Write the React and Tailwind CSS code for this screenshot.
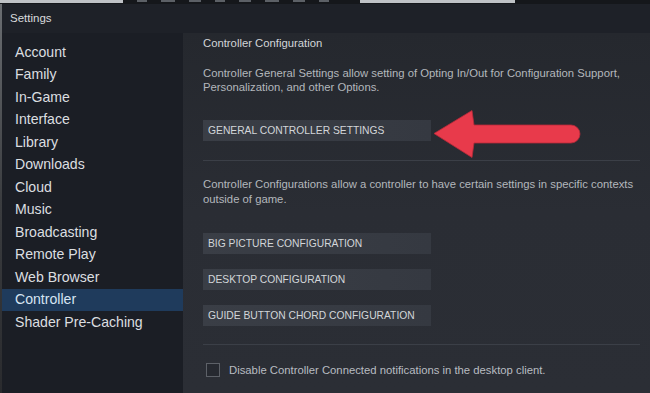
import React from 'react';

const NAV = [
  'Account', 'Family', 'In-Game', 'Interface', 'Library', 'Downloads', 'Cloud',
  'Music', 'Broadcasting', 'Remote Play', 'Web Browser', 'Controller', 'Shader Pre-Caching',
];

function ConfigButton({ children }) {
  return (
    <div className="w-[228px] h-[21px] flex items-center px-[5px] bg-gradient-to-r from-[#3a3e46] to-[#353941] text-[10.3px] text-[#d3d6d9] whitespace-nowrap">
      {children}
    </div>
  );
}

export default function App() {
  return (
    <div className="w-[650px] h-[393px] overflow-hidden flex flex-col bg-[#15171b] font-['Liberation_Sans',Arial,sans-serif]">
      {/* strip of the desktop behind the window */}
      <div className="h-[4px] flex items-start shrink-0">
        <div className="w-[123px] h-[3px] bg-[#bfc2c6]" />
        <div className="w-[237px] h-[3px] flex gap-[14px] pl-[14px]">
          <div className="w-[10px] h-[2px] bg-[#5c6066]" />
          <div className="w-[14px] h-[2px] bg-[#5c6066]" />
          <div className="w-[12px] h-[2px] bg-[#5c6066]" />
          <div className="w-[10px] h-[2px] bg-[#5c6066]" />
          <div className="w-[12px] h-[2px] bg-[#5c6066]" />
          <div className="w-[14px] h-[2px] bg-[#5c6066]" />
          <div className="w-[12px] h-[2px] bg-[#5c6066]" />
          <div className="w-[10px] h-[2px] bg-[#5c6066]" />
        </div>
        <div className="w-[155px] h-[3px] bg-[#bfc2c6]" />
      </div>

      <div className="flex-1 flex min-h-0">
        <div className="w-[2px] bg-gradient-to-b from-[#6b6e72] via-[#3b3d40] to-[#2a2b2e]" />

        <div className="flex-1 flex flex-col min-w-0">
          {/* title bar */}
          <div className="h-[29px] shrink-0 flex items-center pl-[8px] bg-[#1e2128] text-[11.5px] text-[#d9dbdd]">
            Settings
          </div>

          <div className="flex-1 flex min-h-0">
            {/* sidebar */}
            <div className="w-[181px] shrink-0 bg-[#1b1e25] pt-[8px] flex flex-col">
              {NAV.map((item) => (
                <div
                  key={item}
                  className={`h-[22.5px] flex items-center pl-[13px] text-[14.1px] whitespace-nowrap ${
                    item === 'Controller' ? 'bg-[#1f3b5c] text-[#d6e4f2]' : 'text-[#dcdee0]'
                  }`}
                >
                  {item}
                </div>
              ))}
            </div>

            {/* content */}
            <div className="relative flex-1 bg-gradient-to-b from-[#25282e] via-[#2a2d34] to-[#2b2e35] pl-[20px] pr-[10px] pt-[3px] flex flex-col text-[11.3px] whitespace-nowrap">
              <div className="h-[14px] leading-[14px] text-[#d2d5d8]">Controller Configuration</div>

              <div className="mt-[16px] leading-[14px] text-[#b3b7bc]">
                Controller General Settings allow setting of Opting In/Out for Configuration Support,
                <br />
                Personalization, and other Options.
              </div>

              <div className="mt-[26px]">
                <ConfigButton>GENERAL CONTROLLER SETTINGS</ConfigButton>
              </div>

              <div className="mt-[19px] h-px bg-[#3b3f47]" />

              <div className="mt-[16px] leading-[15px] text-[#b3b7bc]">
                Controller Configurations allow a controller to have certain settings in specific contexts
                <br />
                outside of game.
              </div>

              <div className="mt-[26px] flex flex-col gap-[15px]">
                <ConfigButton>BIG PICTURE CONFIGURATION</ConfigButton>
                <ConfigButton>DESKTOP CONFIGURATION</ConfigButton>
                <ConfigButton>GUIDE BUTTON CHORD CONFIGURATION</ConfigButton>
              </div>

              <div className="mt-[18px] h-px bg-[#3b3f47]" />

              <div className="mt-[17px] flex items-center gap-[9px] pl-[3px]">
                <div className="w-[14px] h-[14px] border border-[#5d6168] bg-[#262930]" />
                <span className="text-[#b8bcc1]">Disable Controller Connected notifications in the desktop client.</span>
              </div>

              {/* red annotation arrow */}
              <svg
                className="absolute left-[250px] top-[76px]"
                width="150"
                height="52"
                viewBox="0 0 150 52"
              >
                <path
                  d="M1 24.5 L39 1.5 L41 16 L138 16 A9 9 0 0 1 138 34 L41 34 L39 48.5 Z"
                  fill="#e83a4b"
                  stroke="#b82a38"
                  strokeWidth="0.8"
                  strokeLinejoin="round"
                />
              </svg>
            </div>
          </div>
        </div>
      </div>
    </div>
  );
}
